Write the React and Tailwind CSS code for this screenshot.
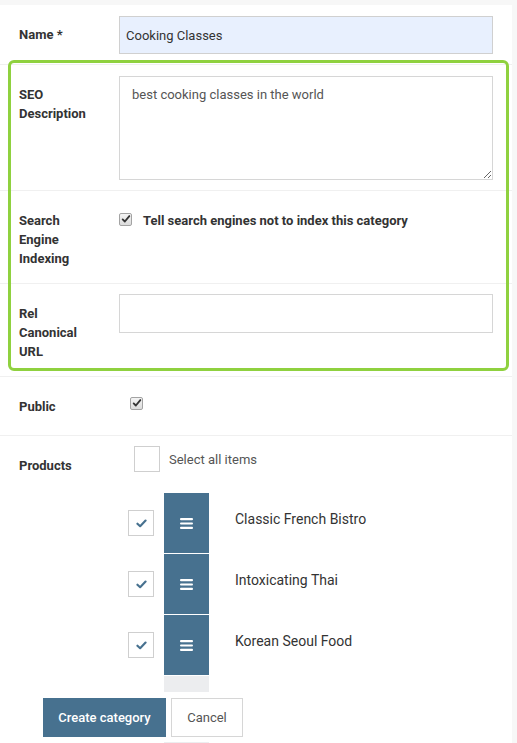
import React from "react";

const PRODUCTS = ["Classic French Bistro", "Intoxicating Thai", "Korean Seoul Food"];

// old-style grey browser checkbox, drawn so it looks the same everywhere
const GreyCheck = ({ className = "" }) => (
  <span className={`inline-flex h-[13px] w-[13px] shrink-0 items-center justify-center rounded-[2px] border border-[#a3a3a3] bg-gradient-to-b from-[#f4f4f4] to-[#dcdcdc] ${className}`}>
    <svg viewBox="0 0 12 12" className="h-[10px] w-[10px]">
      <path d="M2 6.5 L4.6 9 L10 2.5" fill="none" stroke="#333" strokeWidth="2.2" strokeLinecap="round" strokeLinejoin="round" />
    </svg>
  </span>
);

const BoxCheck = ({ checked }) => (
  <span className="flex h-[26px] w-[26px] items-center justify-center border border-[#cfcfcf] bg-white">
    {checked && (
      <svg viewBox="0 0 12 10" className="h-[9px] w-[11px]">
        <path d="M1.5 5.2 L4.5 8 L10.5 1.8" fill="none" stroke="#47718f" strokeWidth="2.4" strokeLinecap="round" strokeLinejoin="round" />
      </svg>
    )}
  </span>
);

const Bars = () => (
  <svg viewBox="0 0 13 11" className="h-[11px] w-[13px]">
    <rect x="0" y="0" width="13" height="2.2" rx="1" fill="#fff" />
    <rect x="0" y="4.4" width="13" height="2.2" rx="1" fill="#fff" />
    <rect x="0" y="8.8" width="13" height="2.2" rx="1" fill="#fff" />
  </svg>
);

const Row = ({ label, children, fieldClass = "pt-[11px] pb-[10px]", labelClass = "pb-[15px]", border = true }) => (
  <div className={`flex ${border ? "border-b border-[#f0f0f0]" : ""}`}>
    <div className={`w-[119px] shrink-0 pl-[19px] pt-[20px] text-[13px] font-bold leading-[19px] text-[#333] ${labelClass}`}>
      {label}
    </div>
    <div className={`flex-1 pr-[19px] ${fieldClass}`}>{children}</div>
  </div>
);

export default function App() {
  return (
    <div className="min-h-[743px] bg-[#f7f7f7] pt-[5px] font-['Roboto',sans-serif]">
      <div className="w-[512px] bg-white">
        <Row label="Name *">
          <input
            readOnly
            value="Cooking Classes"
            className="block h-[38px] w-full border border-[#d0d0d0] bg-[#e8f0fe] px-[6px] text-[13px] text-[#333] outline-none"
          />
        </Row>

        <div className="relative">
          <Row label={<>SEO<br />Description</>}>
            <textarea
              readOnly
              defaultValue="best cooking classes in the world"
              className="block h-[104px] w-full border border-[#d6d6d6] px-[12px] pt-[8px] text-[13px] leading-[19px] text-[#555] outline-none"
            />
          </Row>
          <Row label={<>Search<br />Engine<br />Indexing</>} fieldClass="pt-[20px]">
            <div className="flex items-center gap-[11px] leading-[19px]">
              <GreyCheck className="-mt-[3px]" />
              <span className="text-[13px] font-bold text-[#333]">Tell search engines not to index this category</span>
            </div>
          </Row>
          <Row label={<>Rel<br />Canonical<br />URL</>} fieldClass="pt-[10px] pb-[10px]">
            <input readOnly className="block h-[39px] w-full border border-[#d6d6d6] bg-white outline-none" />
          </Row>
          {/* highlight outline drawn over the SEO fields */}
          <div className="pointer-events-none absolute -top-[5px] left-[8px] w-[501px] bottom-[6px] rounded-[6px] border-[3px] border-[#8fd13f]" />
        </div>

        <Row label="Public" fieldClass="pt-[14px]" labelClass="pb-[19px]">
          <GreyCheck className="ml-[11px] flex" />
        </Row>

        <Row label="Products" fieldClass="pt-[10px]" border={false}>
          <div className="flex items-center pl-[15px]">
            <BoxCheck />
            <span className="ml-[9px] mt-[2px] text-[13px] text-[#555]">Select all items</span>
          </div>
          <div className="mt-[21px] pl-[9px]">
            {PRODUCTS.map((p) => (
              <div key={p} className="mb-px flex">
                <div className="flex h-[60px] items-center">
                  <BoxCheck checked />
                </div>
                <div className="ml-[10px] flex h-[60px] w-[45px] items-center justify-center bg-[#47718f]">
                  <Bars />
                </div>
                <div className="ml-[26px] pt-[17px] text-[14px] leading-[19px] text-[#333]">{p}</div>
              </div>
            ))}
            <div className="ml-[36px] mt-[1px] h-[16px] w-[45px] bg-[#ecedef]" />
          </div>
        </Row>

        <div className="flex gap-[5px] bg-white pl-[43px] pt-[6px] pb-[5px]">
          <button className="h-[39px] w-[123px] bg-[#47718f] text-[13px] font-medium text-white">Create category</button>
          <button className="h-[39px] w-[72px] border border-[#d6d6d6] bg-white text-[13px] text-[#555]">Cancel</button>
        </div>
        <div className="ml-[164px] h-[20px] w-[45px] bg-[#ecedef]" />
      </div>
    </div>
  );
}
